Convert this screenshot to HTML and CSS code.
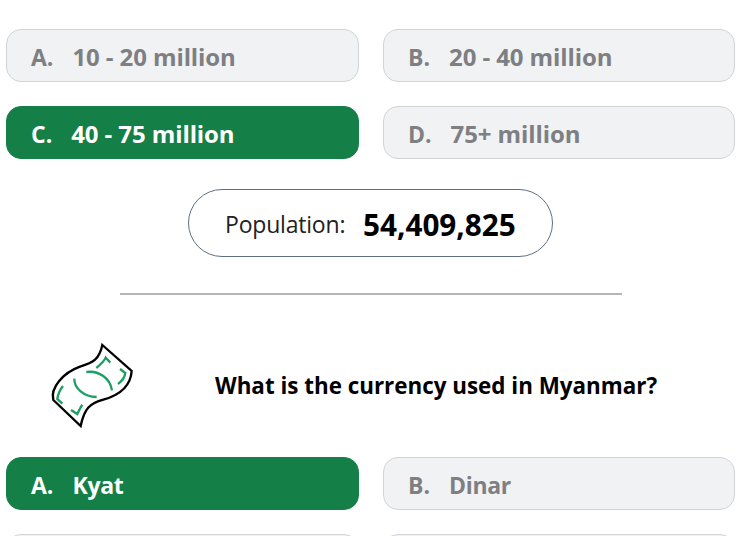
FILE: index.html
```html
<!DOCTYPE html>
<html lang="en">
<head>
<meta charset="utf-8">
<title>Myanmar quiz</title>
<link rel="stylesheet" href="styles.css">
</head>
<body>
<main class="page">
  <section class="options">
    <div class="option"><span class="letter">A.</span><span class="answer">10 - 20 million</span></div>
    <div class="option"><span class="letter">B.</span><span class="answer">20 - 40 million</span></div>
    <div class="option correct"><span class="letter">C.</span><span class="answer">40 - 75 million</span></div>
    <div class="option"><span class="letter">D.</span><span class="answer">75+ million</span></div>
  </section>
  <div class="pill-row">
    <div class="pill"><span class="pill-label">Population:</span><strong class="pill-value">54,409,825</strong></div>
  </div>
  <hr class="divider">
  <section class="question">
    <svg class="q-icon" viewBox="0 0 360 330" aria-hidden="true">
      <path class="outline" d="M217 42 L305 120 C302 165 270 192 220 206 C180 217 163 232 152 285 L70 207 C60 170 100 125 150 107 C190 95 208 85 217 42 Z"/>
      <path class="money" d="M199 111 C212 100 222 92 227 80 L241 95"/>
      <path class="money" d="M270 114 L286 126 C284 140 276 150 264 159"/>
      <path class="money" d="M169 123 C205 118 240 140 246 178"/>
      <path class="money" d="M133 143 C132 170 160 198 200 198"/>
      <path class="money" d="M99 165 C88 178 84 190 82 204 L97 218"/>
      <path class="money" d="M123 237 L142 249 C148 238 150 230 157 221"/>
    </svg>
    <h2 class="q-text">What is the currency used in Myanmar?</h2>
  </section>
  <section class="options">
    <div class="option correct"><span class="letter">A.</span><span class="answer short">Kyat</span></div>
    <div class="option"><span class="letter">B.</span><span class="answer short">Dinar</span></div>
    <div class="option"></div>
    <div class="option"></div>
  </section>
</main>
</body>
</html>
```
FILE: styles.css
```css
html, body {
  margin: 0;
  padding: 0;
  height: 536px;
  overflow: hidden;
  background: #fff;
}
body {
  font-family: "Open Sans", "Noto Sans", sans-serif;
  color: #000;
}
.page {
  padding: 29px 12px 0 6px;
}
.options {
  display: grid;
  grid-template-columns: 353px 352px;
  column-gap: 24px;
  row-gap: 24px;
}
.option {
  box-sizing: border-box;
  height: 53px;
  display: flex;
  align-items: center;
  padding: 2px 0 0 24px;
  background: #f1f2f4;
  border: 1px solid #d2d3d6;
  border-radius: 15px;
  color: #7e7f83;
  font-size: 23px;
  font-weight: 700;
}
.option.correct {
  background: #147f46;
  border-color: #147f46;
  color: #fff;
}
.letter {
  margin-right: 19px;
}
.answer {
  font-size: 24px;
  letter-spacing: -0.1px;
}
.answer.short {
  font-size: 23px;
  letter-spacing: -0.3px;
}
.pill-row {
  display: flex;
  margin-top: 30px;
  padding-left: 182px;
}
.pill {
  box-sizing: border-box;
  width: 365px;
  height: 68px;
  display: flex;
  align-items: center;
  padding: 2px 0 0 36px;
  border: 1px solid #5f6f80;
  border-radius: 34px;
}
.pill-label {
  width: 138px;
  font-size: 23px;
  font-weight: 400;
  color: #222;
  letter-spacing: -0.2px;
}
.pill-value {
  font-size: 29.7px;
  font-weight: 700;
}
.divider {
  width: 502px;
  height: 2px;
  margin: 36px 0 0 114px;
  border: 0;
  background: #b5b6b8;
}
.question {
  display: flex;
  align-items: center;
  height: 110px;
  margin-top: 36px;
  padding-left: 24px;
  margin-bottom: 16px;
}
.q-icon {
  width: 120px;
  height: 110px;
  flex: none;
}
.outline {
  fill: #fff;
  stroke: #000;
  stroke-width: 7;
  stroke-linejoin: miter;
}
.money {
  fill: none;
  stroke: #1f9e63;
  stroke-width: 7;
}
.q-text {
  margin: 0 0 2px 65px;
  font-size: 22.4px;
  font-weight: 700;
  white-space: nowrap;
}
```
